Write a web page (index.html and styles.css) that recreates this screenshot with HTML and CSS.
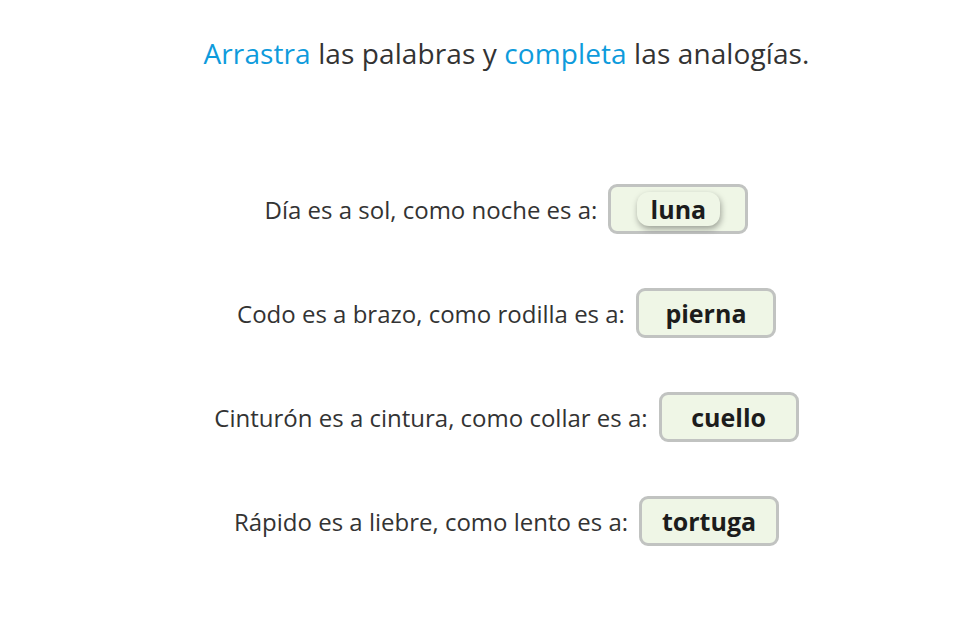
FILE: index.html
```html
<!DOCTYPE html>
<html lang="es">
<head>
<meta charset="utf-8">
<link rel="stylesheet" href="styles.css">
</head>
<body>
<main class="page">
  <h1 class="title"><span class="hl">Arrastra</span> las palabras y <span class="hl">completa</span> las analogías.</h1>
  <div class="rows">
    <div class="row">
      <span class="prompt">Día es a sol, como noche es a:</span>
      <span class="slot"><span class="chip chip-drag">luna</span></span>
    </div>
    <div class="row">
      <span class="prompt">Codo es a brazo, como rodilla es a:</span>
      <span class="slot"><span class="chip">pierna</span></span>
    </div>
    <div class="row">
      <span class="prompt">Cinturón es a cintura, como collar es a:</span>
      <span class="slot"><span class="chip">cuello</span></span>
    </div>
    <div class="row">
      <span class="prompt">Rápido es a liebre, como lento es a:</span>
      <span class="slot"><span class="chip">tortuga</span></span>
    </div>
  </div>
</main>
</body>
</html>
```
FILE: styles.css
```css
html, body {
  margin: 0;
  padding: 0;
  background: #ffffff;
}
body {
  font-family: "Open Sans", "Noto Sans", sans-serif;
  color: #2b2b2b;
}
.page {
  padding-left: 34px;
  display: flex;
  flex-direction: column;
  align-items: center;
}
.title {
  margin: 33px 0 0;
  font-weight: 400;
  font-size: 28px;
  letter-spacing: 0.1px;
  line-height: 40px;
  color: #333333;
}
.hl {
  color: #0e9bdc;
}
.rows {
  margin-top: 111px;
  display: flex;
  flex-direction: column;
  align-items: center;
  gap: 54px;
}
.row {
  display: flex;
  align-items: center;
  gap: 11px;
}
.prompt {
  font-size: 24px;
  color: #333333;
}
.slot {
  box-sizing: border-box;
  width: 140px;
  height: 50px;
  border: 3px solid #c1c3c1;
  border-radius: 9px;
  background: #eff6e6;
  display: flex;
  align-items: center;
  justify-content: center;
}
.chip {
  font-weight: 700;
  font-size: 25px;
  color: #1c1c1c;
  line-height: 34px;
  padding: 0 14px;
  border-radius: 12px;
}
.chip-drag {
  background: #eff6e6;
  box-shadow: 1px 3px 6px rgba(0, 0, 0, 0.35);
}
```
